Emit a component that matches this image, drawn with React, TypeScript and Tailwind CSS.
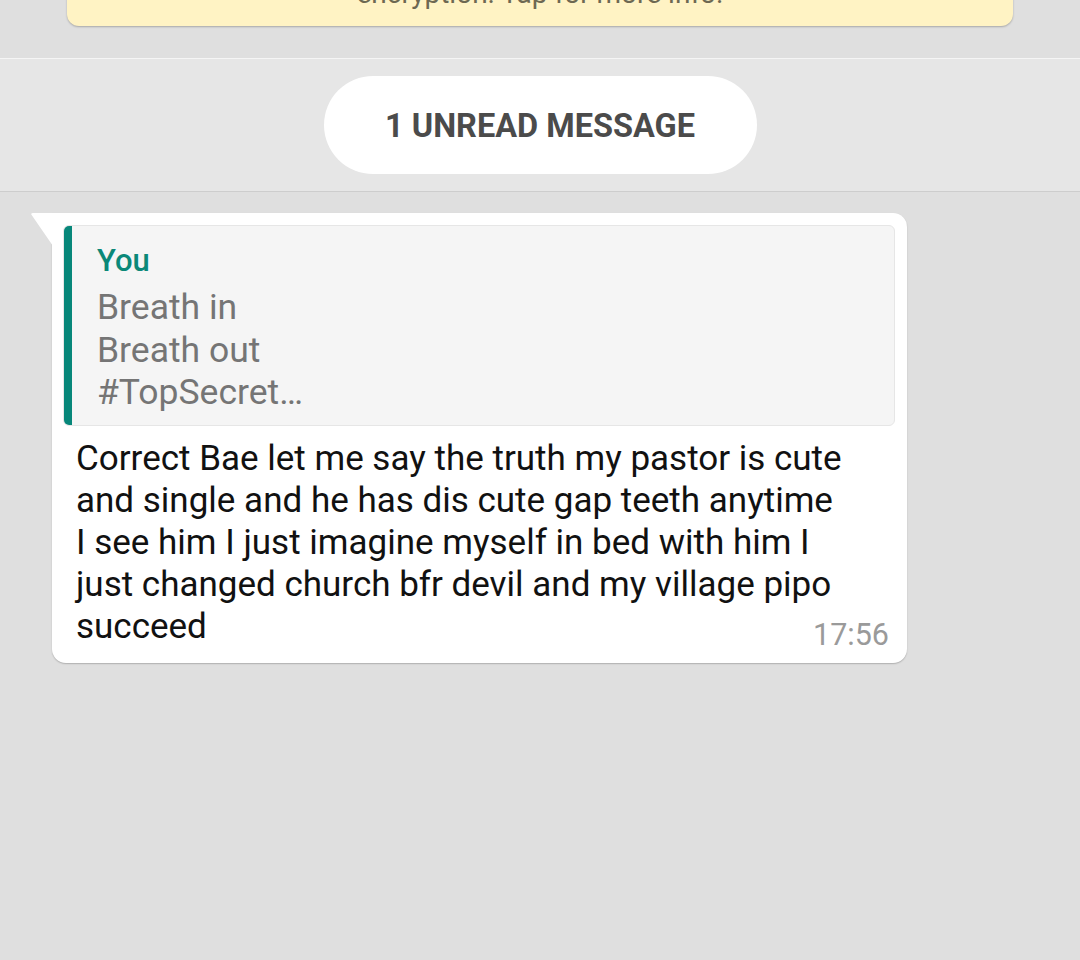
import React from "react";

export default function App() {
  return (
    <div
      className="w-[1080px] h-[960px] overflow-hidden bg-[#dfdfdf] flex flex-col"
      style={{ fontFamily: "Roboto, 'Noto Sans', sans-serif" }}
    >
      <div className="px-[67px]">
        <div className="-mt-[74px] pt-2 pb-[12px] bg-[#fff3c4] rounded-[12px] shadow-[0_1px_2px_rgba(0,0,0,0.25)] text-center text-[28px] leading-[40px] text-[#6d6852]">
          Messages to this chat and calls are now secured with end-to-end
          <br />
          encryption. Tap for more info.
        </div>
      </div>

      <div className="mt-[32px] border-t border-t-[#f5f5f5] border-b border-b-[#cdcdcd] bg-[#e6e6e6] pt-[17px] pb-[17px] flex justify-center">
        <div className="w-[433px] h-[98px] pt-[3px] rounded-full bg-white flex items-center justify-center text-[32.5px] font-bold text-[#4b4b4b]">
          1 UNREAD MESSAGE
        </div>
      </div>

      <div className="mt-[21px] pl-[52px]">
        <div className="relative w-[855px] bg-white rounded-[14px] rounded-tl-none shadow-[0_1px_1.5px_rgba(0,0,0,0.22)] pt-[12px] pl-[11px] pr-[12px] pb-[10px]">
          <svg
            className="absolute left-[-22px] top-0"
            width="23"
            height="34"
            viewBox="0 0 23 34"
          >
            <path d="M23 0 L3 0 Q0 0 2 2.5 L23 33 Z" fill="#ffffff" />
          </svg>
          <div className="flex rounded-[6px] border border-[#e6e6e6] bg-[#f5f5f5] overflow-hidden">
            <div className="w-[8px] bg-[#07877a] shrink-0" />
            <div className="pl-[25px] pt-[16px] pb-[11px]">
              <div className="text-[31px] leading-[38px] font-medium text-[#0b8878]">
                You
              </div>
              <div className="mt-[6px] text-[35.5px] leading-[42.5px] text-[#757575]">
                Breath in
                <br />
                Breath out
                <br />
                #TopSecret…
              </div>
            </div>
          </div>
          <div className="pl-[13px] pt-[12px] text-[35px] leading-[42px] text-[#111111]">
            Correct Bae let me say the truth my pastor is cute
            <br />
            and single and he has dis cute gap teeth anytime
            <br />
            I see him I just imagine myself in bed with him I
            <br />
            just changed church bfr devil and my village pipo
            <br />
            succeed
          </div>
          <div className="-mt-[31px] flex justify-end pr-[6px] text-[30.5px] leading-[36px] text-[#9a9a9a]">
            17:56
          </div>
        </div>
      </div>
    </div>
  );
}
